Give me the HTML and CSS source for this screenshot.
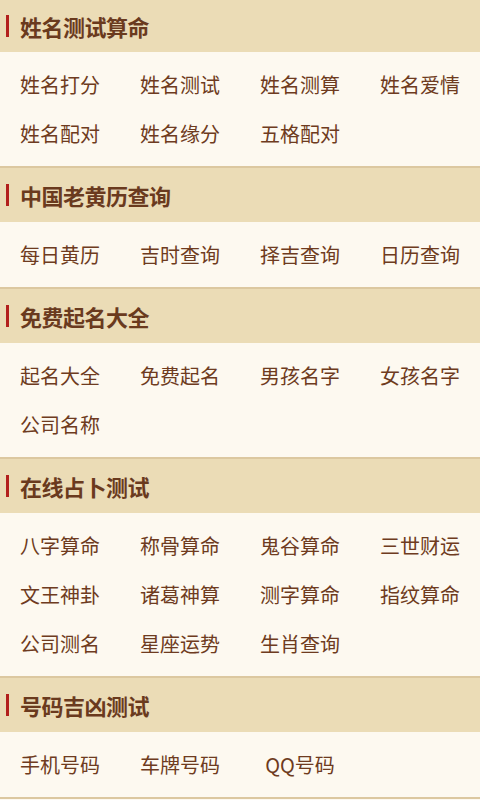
FILE: index.html
```html
<!DOCTYPE html>
<html lang="zh">
<head>
<meta charset="utf-8">
<title>测算</title>
<link rel="stylesheet" href="styles.css">
</head>
<body>
<section class="sec first">
  <h2 class="head"><span class="bar"></span>姓名测试算命</h2>
  <ul class="grid">
    <li>姓名打分</li><li>姓名测试</li><li>姓名测算</li><li>姓名爱情</li>
    <li>姓名配对</li><li>姓名缘分</li><li>五格配对</li>
  </ul>
</section>
<section class="sec">
  <h2 class="head"><span class="bar"></span>中国老黄历查询</h2>
  <ul class="grid">
    <li>每日黄历</li><li>吉时查询</li><li>择吉查询</li><li>日历查询</li>
  </ul>
</section>
<section class="sec">
  <h2 class="head"><span class="bar"></span>免费起名大全</h2>
  <ul class="grid">
    <li>起名大全</li><li>免费起名</li><li>男孩名字</li><li>女孩名字</li>
    <li>公司名称</li>
  </ul>
</section>
<section class="sec">
  <h2 class="head"><span class="bar"></span>在线占卜测试</h2>
  <ul class="grid">
    <li>八字算命</li><li>称骨算命</li><li>鬼谷算命</li><li>三世财运</li>
    <li>文王神卦</li><li>诸葛神算</li><li>测字算命</li><li>指纹算命</li>
    <li>公司测名</li><li>星座运势</li><li>生肖查询</li>
  </ul>
</section>
<section class="sec">
  <h2 class="head"><span class="bar"></span>号码吉凶测试</h2>
  <ul class="grid">
    <li>手机号码</li><li>车牌号码</li><li>QQ号码</li>
  </ul>
</section>
</body>
</html>
```
FILE: styles.css
```css
html, body {
  margin: 0;
  padding: 0;
  background: #fdf9f0;
}
body {
  width: 480px;
  font-family: "Noto Sans CJK SC", "Noto Sans", sans-serif;
  color: #6e3b20;
}
.sec {
  border-bottom: 2px solid #dcc8a0;
}
.head {
  display: flex;
  align-items: center;
  height: 54px;
  margin: 0;
  background: #ebdcb6;
  font-size: 22px;
  font-weight: 700;
  color: #6a3a1e;
  letter-spacing: -0.5px;
}
.sec.first .head {
  height: 52px;
}
.bar {
  display: block;
  width: 3px;
  height: 22px;
  margin-left: 6px;
  margin-right: 11px;
  background: #b2201c;
}
.grid {
  list-style: none;
  margin: 0;
  padding: 8px 0 8px;
  display: grid;
  grid-template-columns: repeat(4, 120px);
  grid-auto-rows: 49px;
  background: #fdf9f0;
}
.grid li {
  display: flex;
  align-items: center;
  justify-content: center;
  font-size: 20px;
  color: #6e3b20;
}
```
